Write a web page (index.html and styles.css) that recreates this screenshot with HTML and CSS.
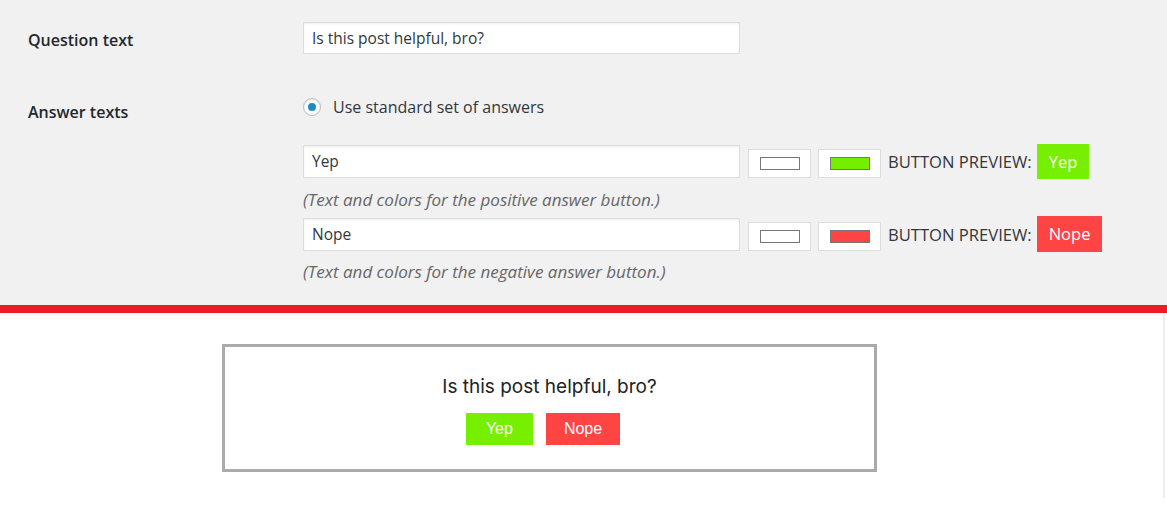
FILE: index.html
```html
<!DOCTYPE html>
<html>
<head>
<meta charset="utf-8">
<link rel="stylesheet" href="styles.css">
</head>
<body>
<div class="settings">
  <div class="row row-question">
    <div class="label">Question text</div>
    <div class="field">
      <div class="text-input">Is this post helpful, bro?</div>
    </div>
  </div>
  <div class="row row-answers">
    <div class="label label-answers">Answer texts</div>
    <div class="field">
      <div class="radio-line">
        <span class="radio"><span class="radio-dot"></span></span>
        <span class="radio-text">Use standard set of answers</span>
      </div>
      <div class="answer answer-yes">
        <div class="text-input">Yep</div>
        <div class="color-box"><span class="swatch swatch-white"></span></div>
        <div class="color-box"><span class="swatch swatch-green"></span></div>
        <span class="preview-label">BUTTON PREVIEW:</span>
        <span class="preview-btn btn-yes">Yep</span>
      </div>
      <div class="help help-first">(Text and colors for the positive answer button.)</div>
      <div class="answer answer-no">
        <div class="text-input">Nope</div>
        <div class="color-box"><span class="swatch swatch-white"></span></div>
        <div class="color-box"><span class="swatch swatch-red"></span></div>
        <span class="preview-label">BUTTON PREVIEW:</span>
        <span class="preview-btn btn-no">Nope</span>
      </div>
      <div class="help">(Text and colors for the negative answer button.)</div>
    </div>
  </div>
</div>
<div class="divider"></div>
<div class="front">
  <div class="poll">
    <div class="poll-question">Is this post helpful, bro?</div>
    <div class="poll-buttons">
      <span class="poll-btn poll-yes btn-yes">Yep</span>
      <span class="poll-btn poll-no btn-no">Nope</span>
    </div>
  </div>
</div>
</body>
</html>
```
FILE: styles.css
```css
html, body {
  margin: 0;
  padding: 0;
  background: #ffffff;
}
body {
  font-family: "Open Sans", "Noto Sans", sans-serif;
  color: #23282d;
}
.settings {
  background: #f1f1f1;
  height: 305px;
  box-sizing: border-box;
  padding: 22px 0 0 28px;
}
.row {
  display: flex;
}
.label {
  width: 275px;
  flex: none;
  font-size: 16px;
  font-weight: 600;
  color: #23282d;
}
.row-question .label {
  line-height: 32px;
  padding-top: 2px;
}
.row-answers {
  margin-top: 41px;
}
.label-answers {
  padding-top: 4px;
  line-height: 22px;
}
.field {
  display: flex;
  flex-direction: column;
}
.text-input {
  width: 437px;
  height: 33px;
  box-sizing: border-box;
  background: #fff;
  border: 1px solid #dddddd;
  box-shadow: inset 0 1px 2px rgba(0,0,0,0.07);
  padding: 0 8px;
  font-size: 15.5px;
  line-height: 31px;
  color: #32373c;
}
.row-question .text-input {
  height: 32px;
  line-height: 30px;
}
.radio-line {
  display: flex;
  align-items: center;
  height: 20px;
}
.radio {
  width: 16px;
  height: 16px;
  border: 1px solid #b4b9be;
  border-radius: 50%;
  background: #fff;
  display: flex;
  align-items: center;
  justify-content: center;
  box-shadow: inset 0 1px 2px rgba(0,0,0,0.1);
  margin-right: 12px;
}
.radio-dot {
  width: 8px;
  height: 8px;
  border-radius: 50%;
  background: #1e8cbe;
}
.radio-text {
  font-size: 16px;
  color: #32373c;
}
.answer {
  display: flex;
  align-items: center;
  height: 35px;
}
.answer-yes {
  margin-top: 27px;
}
.answer-no {
  margin-top: 6px;
  height: 36px;
}
.color-box {
  width: 63px;
  height: 29px;
  box-sizing: border-box;
  border: 1px solid #dddddd;
  background: #fff;
  display: flex;
  align-items: center;
  justify-content: center;
  margin-left: 8px;
  margin-top: 4px;
}
.color-box + .color-box {
  margin-left: 7px;
}
.swatch {
  width: 40px;
  height: 13px;
  box-sizing: border-box;
  border: 1px solid #777;
}
.swatch-white { background: #ffffff; }
.swatch-green { background: #76ee00; }
.swatch-red { background: #ff4444; }
.preview-label {
  margin-left: 7px;
  font-size: 16.6px;
  color: #32373c;
}
.preview-btn {
  margin-left: 5px;
  color: #fff;
  font-size: 16.5px;
  height: 35px;
  line-height: 35px;
  padding: 0 12px;
}
.answer-no .preview-btn {
  height: 36px;
  line-height: 36px;
}
.btn-yes { background: #76ef00; }
.btn-no { background: #ff4444; }
.help {
  font-style: italic;
  font-size: 17px;
  color: #666;
  height: 20px;
  line-height: 20px;
  margin-top: 10px;
}
.help-first {
  margin-top: 11px;
}
.divider {
  height: 8px;
  background: #ed1c24;
}
.front {
  width: 1165px;
  height: 185px;
  border-right: 2px solid #eeeeee;
  padding-top: 31px;
  box-sizing: border-box;
}
.poll {
  margin-left: 222px;
  width: 655px;
  height: 128px;
  box-sizing: border-box;
  border: 3px solid #aaaaaa;
  display: flex;
  flex-direction: column;
  align-items: center;
  padding-top: 28px;
}
.poll-question {
  font-family: "Inter", "Liberation Sans", sans-serif;
  font-size: 19px;
  color: #222;
  line-height: 24px;
}
.poll-buttons {
  display: flex;
  gap: 13px;
  margin-top: 14px;
  margin-right: 13px;
}
.poll-btn {
  font-family: "Liberation Sans", Arial, sans-serif;
  color: #fff;
  font-size: 16px;
  height: 32px;
  line-height: 32px;
}
.poll-yes {
  padding: 0 20px;
}
.poll-no {
  padding: 0 18px;
}
```
